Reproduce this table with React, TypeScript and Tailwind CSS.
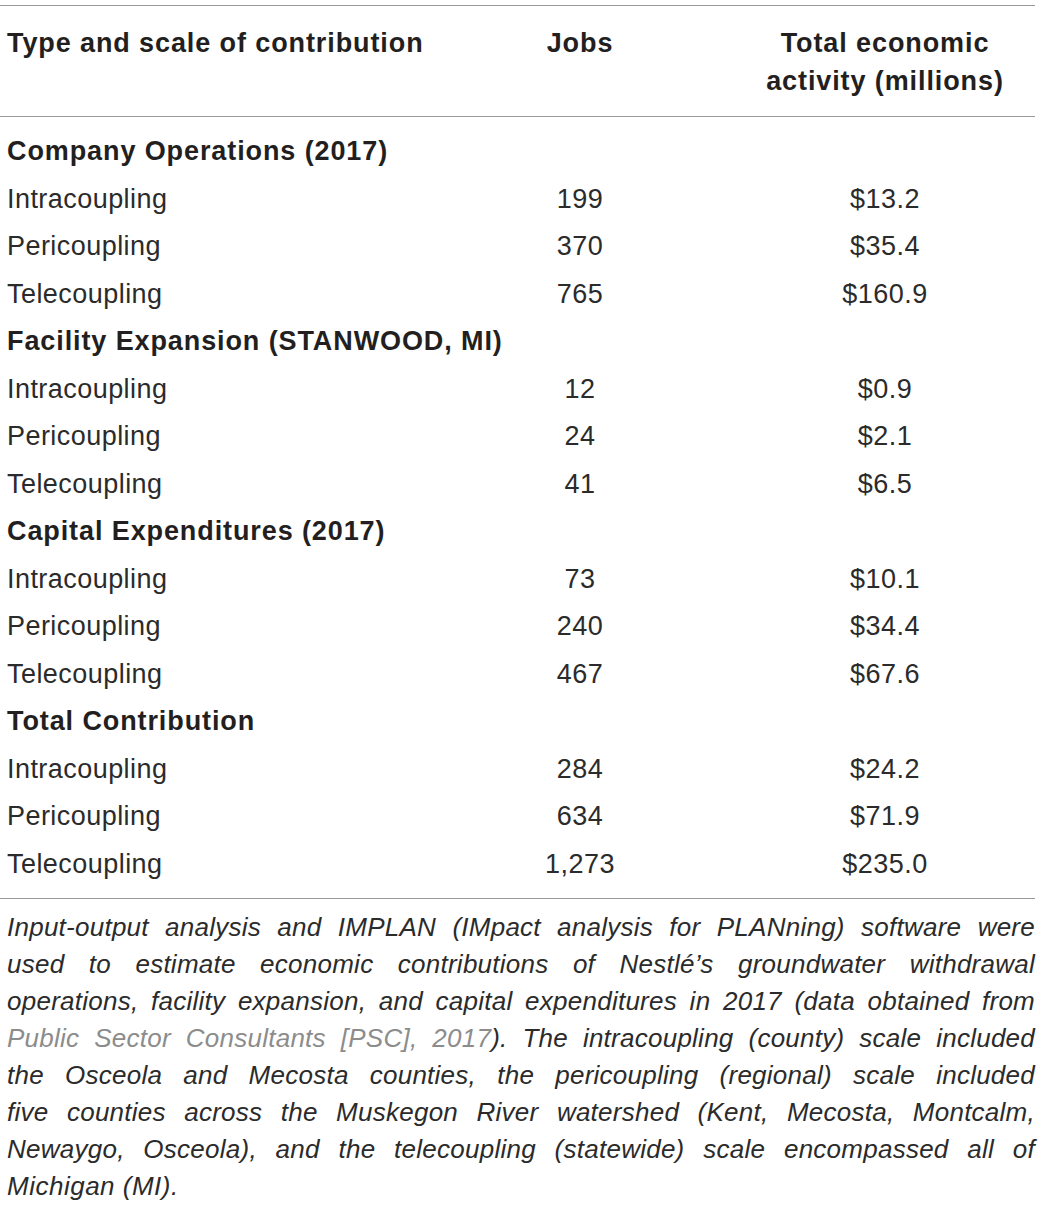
const rows: { group: string; items: [string, string, string][] }[] = [
  {
    group: "Company Operations (2017)",
    items: [
      ["Intracoupling", "199", "$13.2"],
      ["Pericoupling", "370", "$35.4"],
      ["Telecoupling", "765", "$160.9"],
    ],
  },
  {
    group: "Facility Expansion (STANWOOD, MI)",
    items: [
      ["Intracoupling", "12", "$0.9"],
      ["Pericoupling", "24", "$2.1"],
      ["Telecoupling", "41", "$6.5"],
    ],
  },
  {
    group: "Capital Expenditures (2017)",
    items: [
      ["Intracoupling", "73", "$10.1"],
      ["Pericoupling", "240", "$34.4"],
      ["Telecoupling", "467", "$67.6"],
    ],
  },
  {
    group: "Total Contribution",
    items: [
      ["Intracoupling", "284", "$24.2"],
      ["Pericoupling", "634", "$71.9"],
      ["Telecoupling", "1,273", "$235.0"],
    ],
  },
];

const justify = "text-justify [text-align-last:justify] whitespace-nowrap";

export default function App() {
  return (
    <div className="min-h-[1207px] w-[1043px] bg-white pt-[5px] font-['Liberation_Sans',Arial,sans-serif] text-[#231f20]">
      <div className="w-[1035px]">
        {/* header */}
        <div className="grid grid-cols-[425px_310px_300px] border-t border-[#9a9a9a] pt-[18px] pb-[16px] text-[27px] leading-[38px] font-bold tracking-[0.9px]">
          <div className="whitespace-nowrap pl-[7px]">Type and scale of contribution</div>
          <div className="text-center">Jobs</div>
          <div className="text-center">
            Total economic
            <br />
            activity (millions)
          </div>
        </div>

        {/* body */}
        <div className="border-t border-[#9a9a9a] pt-[11px] pb-[10px] text-[27px] leading-[47.5px]">
          {rows.map((g) => (
            <div key={g.group}>
              <div className="whitespace-nowrap pl-[7px] font-bold tracking-[0.9px]">{g.group}</div>
              {g.items.map(([label, jobs, total]) => (
                <div key={g.group + label} className="grid grid-cols-[425px_310px_300px] tracking-[0.45px] text-[#2b2b2b]">
                  <div className="pl-[7px]">{label}</div>
                  <div className="text-center">{jobs}</div>
                  <div className="text-center">{total}</div>
                </div>
              ))}
            </div>
          ))}
        </div>

        {/* footnote */}
        <div className="border-t border-[#9a9a9a] pt-[10px] pl-[7px] text-[26px] leading-[37px] italic tracking-[0.25px] text-[#2b2b2b]">
          <div className={justify}>
            Input-output analysis and IMPLAN (IMpact analysis for PLANning) software were
          </div>
          <div className={justify}>
            used to estimate economic contributions of Nestlé’s groundwater withdrawal
          </div>
          <div className={justify}>
            operations, facility expansion, and capital expenditures in 2017 (data obtained from
          </div>
          <div className={justify}>
            <span className="text-[#8c8c8c]">Public Sector Consultants [PSC], 2017</span>). The intracoupling (county) scale included
          </div>
          <div className={justify}>
            the Osceola and Mecosta counties, the pericoupling (regional) scale included
          </div>
          <div className={justify}>
            five counties across the Muskegon River watershed (Kent, Mecosta, Montcalm,
          </div>
          <div className={justify}>
            Newaygo, Osceola), and the telecoupling (statewide) scale encompassed all of
          </div>
          <div className="tracking-[0.5px]">Michigan (MI).</div>
        </div>
      </div>
    </div>
  );
}
